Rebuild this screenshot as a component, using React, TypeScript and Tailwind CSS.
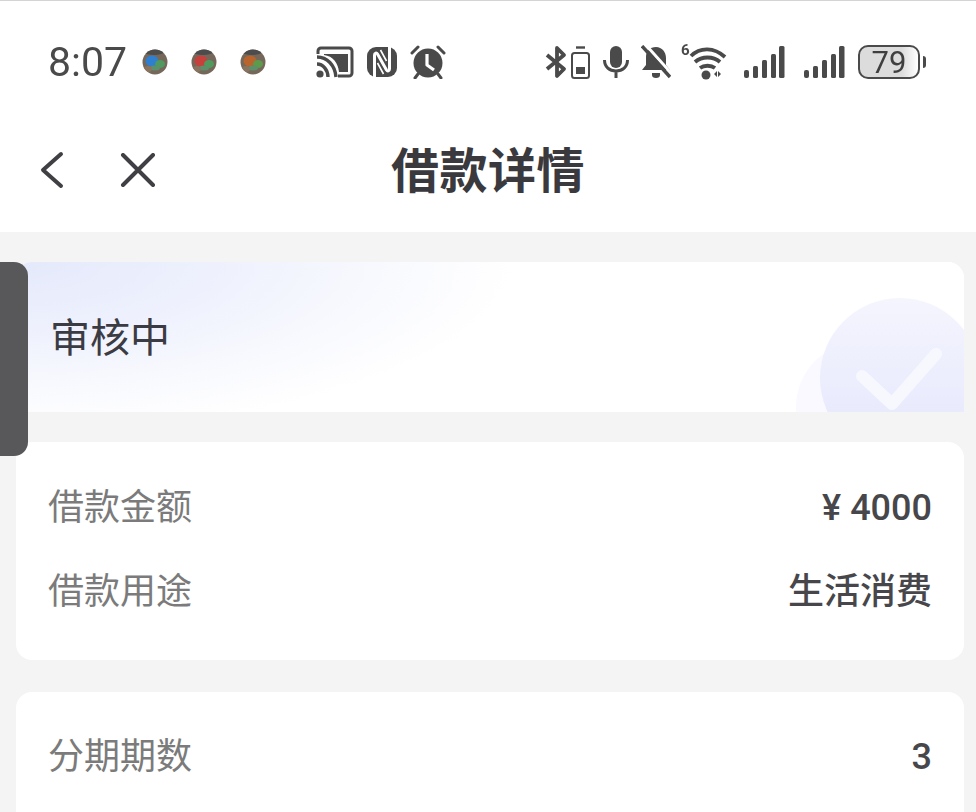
/** Tiny round notification avatar from the status bar. */
function AppDot({ main, accent, id }: { main: string; accent: string; id: string }) {
  return (
    <svg width="26" height="26" viewBox="0 0 26 26" className="blur-[0.6px]">
      <defs>
        <clipPath id={id}>
          <circle cx="13" cy="13" r="12.5" />
        </clipPath>
      </defs>
      <circle cx="13" cy="13" r="12.5" fill="#75685a" />
      <g clipPath={`url(#${id})`}>
        <ellipse cx="10" cy="12" rx="6.500" ry="5.500" fill={main} />
        <ellipse cx="18" cy="15" rx="5" ry="4" fill={accent} />
        <ellipse cx="13" cy="19" rx="5" ry="2.500" fill="#5d8f6a" />
        <ellipse cx="12" cy="3" rx="10" ry="3" fill="#4c4c4c" />
        <ellipse cx="6" cy="20" rx="4" ry="3" fill="#8a7460" />
      </g>
    </svg>
  );
}

function CastIcon() {
  return (
    <svg width="38" height="32" viewBox="0 0 38 32" fill="none" className="text-[#4a4a4a]">
      <path d="M2 8V5a3 3 0 0 1 3-3h28a3 3 0 0 1 3 3v22a3 3 0 0 1-3 3H22" stroke="currentColor" strokeWidth="3" />
      <path d="M8 8h24v18H23C22 17 17 10 8 9z" fill="currentColor" />
      <path d="M1 11c10 0 18 8 19 20M1 18c6 0 11 6 11 13" stroke="currentColor" strokeWidth="3.400" />
      <circle cx="4" cy="28" r="3.600" fill="currentColor" />
    </svg>
  );
}

function NfcIcon() {
  return (
    <svg width="32" height="32" viewBox="0 0 32 32" fill="none">
      <rect x="1" y="1" width="30" height="30" rx="9" fill="#4a4a4a" />
      <path d="M8.500 32V9c0-2 2-2.500 3-1l9 16c1 1.500 3 1 3-1V0" stroke="#fff" strokeWidth="3" />
      <path d="M14.500 4l6 11M11.500 17l6 11" stroke="#fff" strokeWidth="1.600" />
    </svg>
  );
}

function AlarmIcon() {
  return (
    <svg width="36" height="34" viewBox="0 0 36 34" fill="none">
      <circle cx="18" cy="18" r="14.500" fill="#4a4a4a" />
      <path d="M17 9v11l7 5" stroke="#fff" strokeWidth="3.200" strokeLinejoin="round" />
      <path d="M2 8l6-6M34 8l-6-6M8 29l-3 4M28 29l3 4" stroke="#4a4a4a" strokeWidth="3" strokeLinecap="round" />
    </svg>
  );
}

function BluetoothBatteryIcon() {
  return (
    <svg width="46" height="34" viewBox="0 0 46 34" fill="none" stroke="#4a4a4a">
      <path d="M2 10l17 14-7 7V3l7 7L2 24" strokeWidth="3.800" strokeLinejoin="round" />
      <rect x="27" y="8" width="17" height="25" rx="2.500" strokeWidth="2" />
      <path d="M31 2.500h9" strokeWidth="2.400" />
      <rect x="31" y="22" width="9" height="7" fill="#4a4a4a" stroke="none" />
    </svg>
  );
}

function MicIcon() {
  return (
    <svg width="26" height="34" viewBox="0 0 26 34" fill="none" stroke="#4a4a4a">
      <rect x="7" y="1" width="12" height="22" rx="6" fill="#4a4a4a" stroke="none" />
      <path d="M1.500 15c0 7 5 11 11.500 11s11.500-4 11.500-11M13 26v7" strokeWidth="3" />
    </svg>
  );
}

function MutedBellIcon() {
  return (
    <svg width="30" height="34" viewBox="0 0 30 34" fill="none">
      <path d="M15 2c6 0 10 5 10 11v7l4 5H1l4-5v-8c0-6 4-10 10-10z" fill="#4a4a4a" />
      <path d="M11 28h8v2a4 3 0 0 1-8 0z" fill="#4a4a4a" />
      <path d="M4 -1l27 30" stroke="#fff" strokeWidth="3" />
      <path d="M1 1l28 31" stroke="#4a4a4a" strokeWidth="3.400" />
    </svg>
  );
}

function WifiIcon() {
  return (
    <div className="relative h-[36px] w-[46px]">
      <span className="absolute left-0 top-[-1px] text-[15px] font-bold leading-none text-[#4a4a4a]">6</span>
      <svg width="46" height="36" viewBox="0 0 46 36" fill="none">
        <path d="M10 12C19 3 33 3 44 13M14 18c7-6 18-6 25 0M19 24c4-3 11-3 15 0" stroke="#4a4a4a" strokeWidth="3.800" />
        <circle cx="25" cy="31" r="4.500" fill="#4a4a4a" />
        <path d="M33 30l3-3v6zM37 27l3 3-3 3z" fill="#4a4a4a" />
      </svg>
    </div>
  );
}

function SignalIcon() {
  return (
    <svg width="42" height="32" viewBox="0 0 42 32" fill="#4a4a4a">
      <rect x="0" y="24" width="5" height="8" rx="2" />
      <rect x="9" y="20" width="5" height="12" rx="1.500" />
      <rect x="18" y="14" width="5" height="18" rx="1.500" />
      <rect x="27" y="8" width="5" height="24" rx="1.500" />
      <rect x="35" y="0" width="5.500" height="32" rx="1.500" />
    </svg>
  );
}

function BatteryBadge() {
  return (
    <div className="flex items-center gap-[3px]">
      <div className="flex h-[34px] w-[62px] items-center justify-center rounded-[10px] border-[2.5px] border-[#4a4a4a] bg-gradient-to-r from-[#dcdcdc] via-[#dcdcdc] via-[72%] to-white">
        <span className="text-[31px] leading-none text-[#3f3f3f]">79</span>
      </div>
      <div className="h-3 w-[3px] rounded-r bg-[#4a4a4a]" />
    </div>
  );
}

function DetailRow({ label, value, className = '' }: { label: string; value: string; className?: string }) {
  return (
    <div className={`flex items-center justify-between ${className}`}>
      <span className="text-[36px] leading-none text-[#7b7b7b]">{label}</span>
      <span className="text-[36px] font-medium leading-none text-[#47474b]">{value}</span>
    </div>
  );
}

export default function App() {
  return (
    <div className='relative h-[812px] w-[976px] overflow-hidden bg-[#f4f4f4] font-["Roboto","Noto_Sans_CJK_SC",sans-serif]'>
      <header className="border-t border-[#d4d4d4] bg-white">
        <div className="flex h-[119px] items-center pl-[48px] pr-[50px] pt-[3px] blur-[0.5px]">
          <span className="w-[80px] text-[41px] leading-none text-[#4a4a4a]">8:07</span>
          <div className="ml-[14px] flex items-center gap-[23px]">
            <AppDot id="dot-a" main="#2f7fd0" accent="#4f9a5c" />
            <AppDot id="dot-b" main="#c8403c" accent="#4f9a5c" />
            <AppDot id="dot-c" main="#b8642c" accent="#5c9a4c" />
          </div>
          <div className="ml-[50px] flex items-center gap-[12px]">
            <CastIcon />
            <NfcIcon />
            <AlarmIcon />
          </div>
          <div className="ml-auto flex items-center">
            <BluetoothBatteryIcon />
            <div className="ml-[12px]"><MicIcon /></div>
            <div className="ml-[12px]"><MutedBellIcon /></div>
            <div className="ml-[10px]"><WifiIcon /></div>
            <div className="ml-[17px]"><SignalIcon /></div>
            <div className="ml-[18px]"><SignalIcon /></div>
            <div className="ml-[12px]"><BatteryBadge /></div>
          </div>
        </div>
        <div className="relative flex h-[112px] items-center justify-center pb-[8px]">
          <div className="absolute left-[40px] top-[31px] flex items-center gap-[56px]">
            <svg width="24" height="38" viewBox="0 0 24 38" fill="none" stroke="#3f3f44" strokeWidth="4" strokeLinecap="round" strokeLinejoin="round">
              <path d="M21 3L3 19l18 16" />
            </svg>
            <svg width="36" height="34" viewBox="0 0 36 34" fill="none" stroke="#3f3f44" strokeWidth="4" strokeLinecap="round">
              <path d="M3 2l30 30M33 2L3 32" />
            </svg>
          </div>
          <h1 className="text-[48px] font-bold leading-none tracking-[0.5px] text-[#3a3a3e]">借款详情</h1>
        </div>
      </header>

      <main className="pl-[16px] pr-[12px] pt-[30px]">
        <section className="relative flex h-[150px] items-center overflow-hidden rounded-t-[16px] bg-white pl-[36px] pt-[4px]">
          <div className="absolute inset-0 bg-[radial-gradient(ellipse_500px_170px_at_0%_0%,#e4e9fb_0%,#eef1fd_40%,#f8f9fe_72%,#ffffff_100%)]" />
          <div className="absolute left-[780px] top-[80px] h-[130px] w-[130px] rounded-full bg-[#faf9ff]" />
          <div className="absolute left-[804px] top-[36px] h-[160px] w-[160px] rounded-full bg-gradient-to-b from-[#f5f5fe] to-[#e4e6fc]" />
          <svg width="90" height="70" viewBox="0 0 90 70" fill="none" className="absolute left-[838px] top-[84px]">
            <path d="M8 30l30 28L82 8" stroke="#f6f8fe" strokeWidth="12" strokeLinecap="round" strokeLinejoin="round" />
          </svg>
          <span className="relative -ml-[2px] text-[40px] leading-none text-[#3b3b44]">审核中</span>
        </section>

        <section className="mt-[30px] flex h-[218px] flex-col rounded-[16px] bg-white px-[32px] pt-[48px]">
          <DetailRow label="借款金额" value="¥ 4000" />
          <DetailRow label="借款用途" value="生活消费" className="mt-[48px]" />
        </section>

        <section className="mt-[32px] rounded-t-[16px] bg-white px-[32px] pb-[60px] pt-[47px]">
          <DetailRow label="分期期数" value="3" />
        </section>
      </main>

      <div className="absolute left-0 top-[262px] h-[194px] w-[28px] rounded-r-[14px] bg-[#58585a]" />
    </div>
  );
}
